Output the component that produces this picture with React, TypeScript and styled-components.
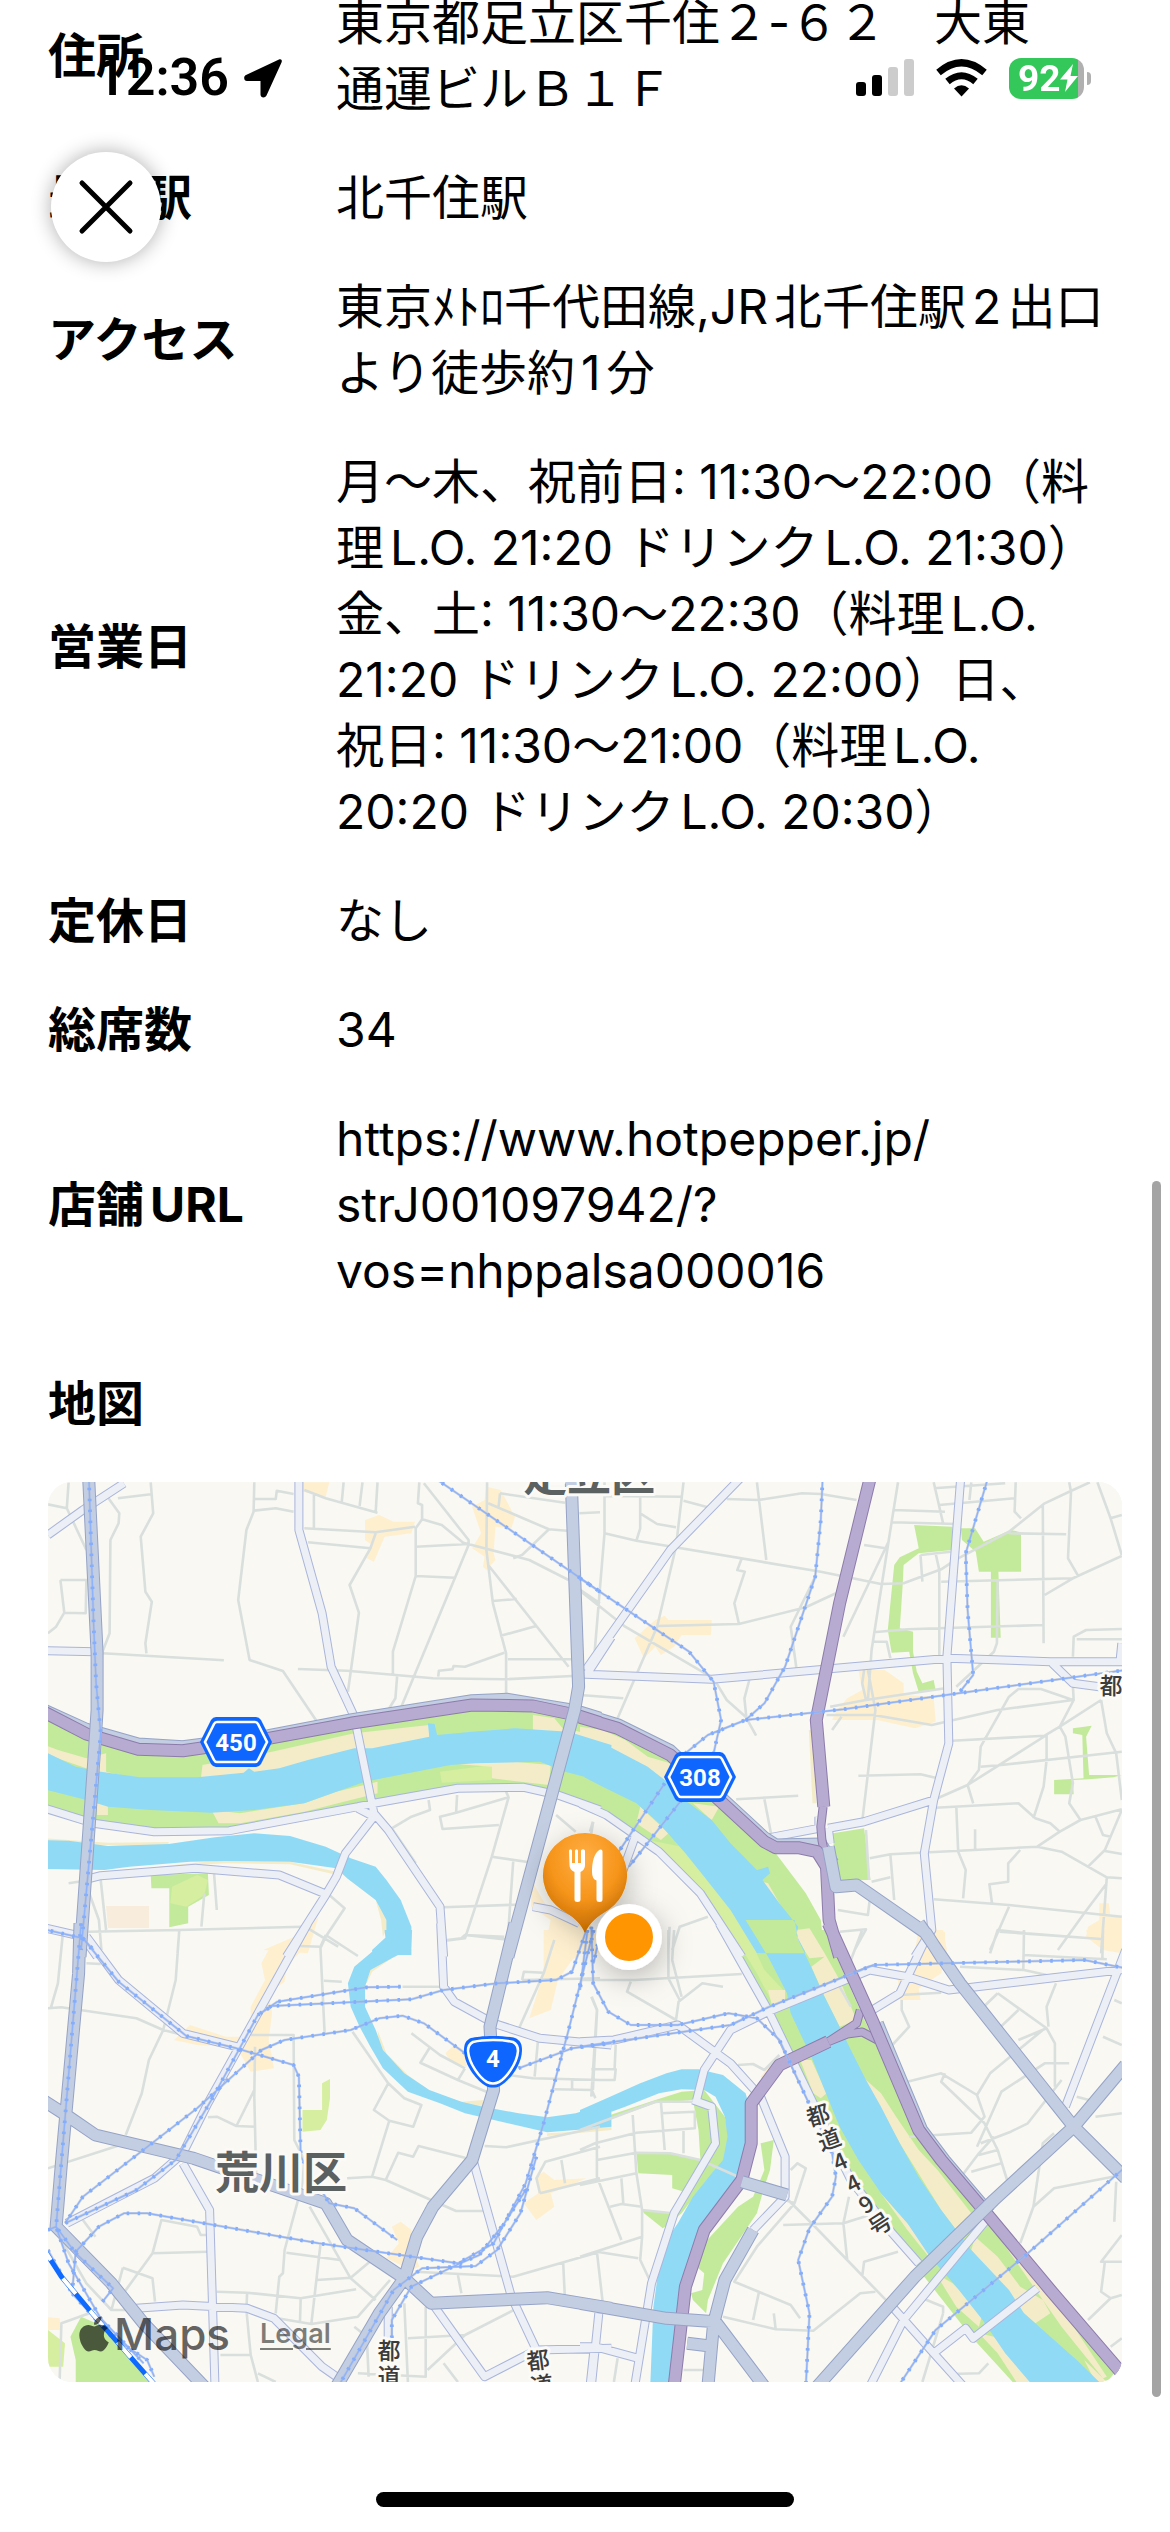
import React from 'react';
import styled, { createGlobalStyle } from 'styled-components';
import { FaApple } from 'react-icons/fa';

const latin = 'Inter, Roboto, "Noto Sans CJK JP", sans-serif';

const GlobalStyle = createGlobalStyle`
  * { box-sizing: border-box; }
  html { overflow-x: hidden; scrollbar-width: none; }
  body {
    margin: 0;
    background: #fff;
    color: #000;
    font-family: ${latin};
    text-autospace: normal;
  }
`;

/* ---------- status bar ---------- */

const StatusBar = styled.header`
  position: fixed;
  inset: 0 0 auto 0;
  z-index: 3;
  height: 156px;
  padding: 0 79px 0 96px;
  display: flex;
  justify-content: space-between;
  align-items: center;
  pointer-events: none;
`;

const StatusGroup = styled.div<{ $gap: number }>`
  display: flex;
  align-items: center;
  gap: ${(p) => p.$gap}px;
`;

const Clock = styled.time`
  font: 600 52px/60px Roboto, sans-serif;
`;

const Battery = styled.div`
  display: flex;
  align-items: center;
  gap: 3px;
`;

const BatteryBody = styled.div`
  width: 75px;
  height: 41px;
  padding-left: 9px;
  display: flex;
  align-items: center;
  border-radius: 12px;
  color: #fff;
  background: linear-gradient(90deg, #34c759 69px, #b0b0b0 69px);
  font: 700 37px/41px Roboto, sans-serif;
`;

const BatteryCap = styled.div`
  width: 4px;
  height: 13px;
  border-radius: 0 4px 4px 0;
  background: #b0b0b0;
`;

/* ---------- floating controls ---------- */

const CloseButton = styled.button`
  position: fixed;
  top: 152px;
  left: 51px;
  z-index: 2;
  width: 110px;
  height: 110px;
  padding: 0;
  display: grid;
  place-items: center;
  border: 0;
  border-radius: 50%;
  background: #fff;
  box-shadow: 0 0 20px rgba(0, 0, 0, 0.32);
`;

const ScrollThumb = styled.div`
  position: fixed;
  top: 1181px;
  right: 9px;
  bottom: 135px;
  width: 9px;
  border-radius: 5px;
  background: #a4a4a4;
`;

const HomeIndicator = styled.div`
  position: fixed;
  bottom: 25px;
  left: 50%;
  width: 418px;
  height: 15px;
  margin-left: -209px;
  border-radius: 8px;
  background: #000;
`;

/* ---------- page ---------- */

const Page = styled.main`
  margin-top: -10px;
  padding: 0 48px 150px;
`;

const Details = styled.dl`
  margin: 0;
  display: flex;
  flex-direction: column;
  gap: 43px;
`;

const Row = styled.div`
  display: grid;
  grid-template-columns: 288px 1fr;
  align-items: center;
  line-height: 66px;
`;

const Label = styled.dt`
  font-size: 48px;
  font-weight: 700;
`;

const Value = styled.dd`
  margin: 0;
  font-size: 48px;
  white-space: pre;
`;

const ShopLink = styled.a`
  color: inherit;
  text-decoration: none;
`;

const MapHeading = styled.h2`
  margin: 67px 0 45px;
  font-size: 48px;
  line-height: 66px;
  font-weight: 700;
`;

const MapFrame = styled.figure`
  position: relative;
  margin: 0;
  overflow: hidden;
  border-radius: 24px;
  background: #f9f8f3;
`;

const MapCanvas = styled.svg`
  display: block;
  width: 100%;
  height: auto;
`;

const MapCredit = styled.figcaption`
  position: absolute;
  left: 26px;
  bottom: 20px;
  display: flex;
  align-items: center;
  gap: 30px;
  color: rgba(0, 0, 0, 0.62);
`;

const MapBrand = styled.span`
  display: flex;
  align-items: center;
  font-size: 44px;
  line-height: 56px;
  font-weight: 500;
`;

const LegalLink = styled.a`
  color: rgba(0, 0, 0, 0.5);
  font-size: 27px;
  line-height: 34px;
  font-weight: 600;
  text-underline-offset: 5px;
`;

/* ---------- map geometry ---------- */

// The map is drawn from four sheets. Each sheet has its own grid,
// which is projected on the 1074 x 900 canvas.
type Sheet = 'nw' | 'ne' | 'sw' | 'se';
type Layer = Record<Sheet, string>;

const sheets: Record<Sheet, { x: number; y: number; sx: number }> = {
  nw: { x: -8, y: -12, sx: 2.8 },
  ne: { x: 532, y: -12, sx: 2.6576 },
  sw: { x: -8, y: 448, sx: 2.8 },
  se: { x: 532, y: 448, sx: 2.6576 },
};

// Lines are separated by ";" and points by blanks.
const project = (layer: Layer, close = false) =>
  (Object.keys(sheets) as Sheet[])
    .flatMap((key) => {
      const s = sheets[key];
      return layer[key]
        .split(';')
        .filter((line) => line.trim())
        .map(
          (line) =>
            'M' +
            line
              .trim()
              .split(/\s+/)
              .map((pt) => {
                const [x, y] = pt.split(',').map(Number);
                return `${(s.x + x / s.sx).toFixed(1)} ${(s.y + y / 3).toFixed(1)}`;
              })
              .join('L') +
            (close ? 'Z' : '')
        );
    })
    .join('');

const town = project(
  {
    nw: `735,37 810,37 800,80 735,65; 910,150 950,135 990,155 1050,155 1040,190 965,200 935,275 915,265 930,225 910,210;
      1250,50 1290,60 1330,140 1320,175 1275,170 1270,250 1275,270 1250,300 1240,290 1245,260 1210,235 1235,190 1210,110 1245,90;
      1375,1230 1430,1330 1540,1360 1568,1450 1410,1450 1430,1350 1375,1310; 625,1440 735,1390 780,1340 770,1375 750,1450`,
    ne: `145,505 200,450 225,437 235,450 350,450 348,495 270,495 250,530 215,555 200,530 170,565;
      740,600 810,600 860,640 860,675 940,680 945,755 890,775 790,750 670,750 680,725 710,685 750,660;
      1380,1300 1405,1300 1410,1340 1440,1340 1440,1450 1390,1440 1345,1400 1350,1370 1380,1350; 930,1390 970,1385 970,1440 900,1440`,
    sw: `640,60 750,0 760,30 690,110 685,155 640,190 650,250 640,330 655,415 590,425 550,350 440,345 375,330 420,285 520,320 590,320 590,230 630,150 620,100;
      1410,0 1568,0 1568,30 1490,90 1450,150 1430,240 1370,265 1410,130; 1135,370 1160,345 1190,360 1195,410 1150,395;
      985,890 1010,875 1040,900 1045,960 1062,1010 1040,1020 1000,1000 970,985 1005,940;
      1390,740 1410,725 1440,750 1530,745 1430,790 1440,830 1390,870 1355,820 1395,790; 22,1162 55,1165 60,1200 22,1200`,
    se: `900,0 965,0 975,60 960,130 900,175 905,210 850,210 845,150 880,120; 1345,0 1440,0 1440,40 1400,60 1390,30 1350,20; 480,440 510,400 520,410 490,460`,
  },
  true
);

const park = project(
  {
    nw: `0,730 140,800 270,840 400,845 640,820 880,770 1200,705 1320,700 1480,735 1600,780 1600,1020 1450,970 1340,950 1170,950 940,1000 530,1080 320,1080 150,1050 0,1005;
      310,1215 470,1210 473,1275 415,1310 415,1360 362,1372 362,1255 312,1255`,
    ne: `0,760 110,795 240,870 380,990 480,1120 520,1150 600,1270 640,1350 650,1450 420,1450 330,1280 180,1130 100,1060 0,1000;
      888,165 990,170 990,240 900,250 860,285 858,340 850,475 885,485 885,545 895,605 910,640 940,630 945,660 900,665 885,610 875,545 828,548 818,480 825,400 835,285 850,262 900,235;
      1012,175 1050,175 1073,215 1145,180 1172,187 1172,305 1112,305 1118,503 1092,503 1092,305 1060,305 1052,245 1015,210;
      1310,775 1360,767 1345,800 1353,915 1440,915 1418,922 1353,928 1310,930 1312,973 1260,973 1260,930 1338,925 1335,795 1310,790;
      672,1090 755,1075 772,1230 680,1230`,
    sw: `85,1220 115,1160 180,1190 310,1356 100,1356 100,1290`,
    se: `650,0 760,280 860,500 960,680 1100,870 1250,1090 1420,1330 1400,1356 1150,1356 1040,1220 880,990 720,760 620,520 500,230 390,0;
      0,595 40,570 200,510 270,485 330,480 385,560 395,620 380,700 330,760 270,850 240,880 220,895 170,850 165,840 245,850 290,790 245,775 245,735 155,730 150,670 240,670 320,690 315,600 300,510 200,520 50,580 0,600;
      480,640 515,630 505,720 490,770 470,850 440,900 380,1000 340,1110 335,1150 300,1110 295,1090 325,1080 330,1030 310,1010 330,940 420,830 460,800 490,720`,
  },
  true
);

const lawn = project(
  {
    nw: `1120,905 1265,885 1265,930 1125,938; 370,1250 440,1215 470,1230 460,1275 410,1310 365,1300`,
    ne: `180,1110 270,1130 350,1230 440,1360 480,1450 430,1450 330,1280 230,1170`,
    sw: `735,540 790,540 790,460 812,447 812,505 803,570 785,600 735,605; 22,1200 70,1240 65,1310 22,1310`,
    se: `400,0 440,0 490,120 540,180 510,215 470,130`,
  },
  true
);

const sand = project(
  {
    nw: `0,820 50,840 130,865 185,850 185,905 260,925 170,910 22,855; 455,885 650,845 880,790 1090,765 1090,810 880,850 600,920 450,930;
      1380,735 1440,745 1475,790 1380,780; 480,1020 560,1030 740,1000 830,965 945,935 945,970 740,1025 560,1060 500,1060;
      160,1000 190,1005 190,1035 160,1035; 1140,880 1270,870 1430,885 1425,945 1265,925 1265,890; 1490,780 1568,800 1568,830 1490,790;
      0,1104 190,1118 360,1116 360,1130 0,1120; 170,1210 420,1180 520,1170 700,1175 830,1205 820,1212 700,1183 520,1180 250,1197; 860,1225 940,1290 955,1350 960,1400 990,1340 940,1250`,
    ne: `0,770 60,780 120,810 180,860 240,880 230,935 180,895 60,830 0,815; 300,1000 370,1010 350,1050; 160,1010 235,1090 215,1110 150,1060;
      575,1380 610,1375 650,1450 600,1450; 485,1235 500,1240 535,1310 525,1310; 608,780 620,780 628,1000 618,1000`,
    sw: `985,85 930,125 915,160 900,150 925,100; 945,300 970,370 1030,435 1095,485 1180,515 1240,510 1240,540 1080,500 950,370; 1420,610 1500,605 1600,585 1600,600 1420,618`,
    se: `575,0 610,10 650,70 690,150 735,270 690,290 650,200 615,110 650,80 610,85 580,30;
      740,430 800,490 840,560 900,660 950,720 1040,850 1000,900 960,840 850,640 790,520;
      1050,920 1110,980 1170,1070 1230,1110 1250,1150 1210,1180 1150,1120 1040,960; 585,390 615,390 655,490 640,505 620,490;
      500,180 545,180 545,210 510,225; 945,1030 990,1060 1070,1150 1060,1190 1000,1130; 1060,1210 1100,1220 1200,1356 1160,1356 1110,1270; 1340,1290 1400,1356 1370,1356;
      800,790 870,880 930,960 930,985 870,900; 1100,900 1300,1170 1400,1340 1390,1345 1280,1190`,
  },
  true
);

const water = project(
  {
    nw: `0,840 22,850 100,890 170,905 280,922 440,922 570,908 585,895 600,905 670,895 750,870 880,835 930,835 1090,800 1086,760 1105,762 1112,795 1210,785 1330,775 1480,785 1600,825 1600,940 1540,925 1470,905 1400,875 1220,880 1150,885 1030,910 910,935 830,965 740,1000 600,1020 480,1028 310,1020 190,1010 130,990 0,955;
      0,1110 80,1112 190,1128 360,1122 490,1102 600,1090 700,1098 800,1130 870,1165 940,1190 970,1230 1010,1290 1040,1370 1040,1455 930,1455 930,1440 970,1400 970,1350 940,1290 860,1225 830,1195 700,1175 520,1173 420,1175 250,1190 180,1200 0,1197`,
    ne: `0,810 70,825 180,890 225,930 290,1000 350,1050 400,1120 470,1200 500,1190 505,1210 485,1230 530,1300 580,1370 575,1395 600,1450 470,1450 400,1320 330,1220 280,1150 210,1060 150,1000 60,950 0,915`,
    sw: `965,0 1042,0 1040,55 985,85 925,120 910,170 910,230 940,300 960,360 1020,430 1090,480 1180,515 1240,530 1340,550 1420,562 1500,550 1600,515 1600,590 1500,600 1420,607 1310,580 1190,550 1120,520 1030,485 960,415 925,350 895,290 870,230 862,160 880,110 930,65 970,50`,
    se: `0,540 80,500 160,460 230,430 270,418 315,418 380,435 440,490 455,550 450,640 430,730 380,820 330,890 300,970 275,1060 260,1180 245,1356 187,1356 195,1130 205,1050 230,930 260,880 300,800 350,730 380,690 392,620 385,560 360,500 330,480 270,478 210,490 120,530 0,580;
      440,-30 500,80 550,190 560,250 585,310 615,380 650,480 690,590 740,690 800,790 870,880 930,980 1000,1070 1070,1170 1130,1270 1195,1356 1380,1356 1320,1290 1240,1210 1180,1150 1140,1080 1040,960 960,840 900,740 850,640 800,530 760,450 720,360 690,290 650,200 610,100 580,30 570,-30`,
  },
  true
);

const minor = project({
  nw: `80,37 75,115 22,103; 75,115 130,240; 185,75 222,130 220,160 197,210 195,490 175,545; 310,37 317,130 282,200 295,365 313,395 295,520 298,550;
    218,85 310,73; 175,550 515,571; 57,330 130,330 128,430 68,428 57,330; 68,428 45,470 22,490; 600,37 598,125 578,180 555,390 587,570 680,603 780,762;
    598,87 660,87 663,62 710,72; 598,122 660,115 710,125; 740,60 800,85 945,128; 850,37 845,95; 903,37 895,108; 945,37 940,125; 767,75 767,175;
    740,175 940,187 1050,170; 750,217 925,235 940,190; 925,235 867,345 893,428 862,665; 1062,37 1058,100 1070,105 1070,148 1052,175 1052,318 988,545 988,612;
    1052,318 1162,323; 1052,230 1200,222; 1075,40 1200,210 1200,225 1010,715; 1070,148 1125,165 1185,218 1370,270 1480,330;
    1252,37 1250,240 1268,400 1305,550 1305,675; 1255,285 1480,590; 1288,70 1470,98; 1288,70 1284,110; 1255,100 1425,178 1475,182; 1425,178 1350,255 1325,265;
    1268,393 1335,387; 1288,498 1392,467; 722,597 860,602 1100,625 1300,628 1490,618; 1115,620 1117,602 1155,598 1158,588 1190,590 1300,548;
    1310,568 1490,568; 1000,620 995,685 975,720; 1510,130 1568,127; 1500,350 1568,400; 1088,990 1092,1020 1040,1040 985,1075 1052,1180;
    1168,975 1165,1028 1120,1040 1127,1077 1285,1065; 1165,1028 1312,982 1265,1160 1190,1405 1135,1412; 1305,965 1312,982; 1265,1160 1380,1178;
    1130,1312 1365,1303; 1190,1395 1300,1400; 1445,1035 1500,1085; 1548,1055 1540,1085; 170,1230 185,1380; 487,1205 495,1320; 460,1270 452,1370;
    80,1240 140,1230; 135,1385 390,1380 735,1370; 390,1380 385,1450; 138,1270 165,1350 172,1440; 810,1275 853,1315 800,1400 785,1435; 750,1375 835,1430; 1325,1175 1310,1400`,
  ne: `65,37 65,190 40,530 35,600; 65,190 150,212 640,305 800,342 860,340 960,298; 160,80 160,130 205,162 255,172; 160,130 160,175 150,212;
    275,37 255,230 205,470 100,745; 65,78 270,80; 275,92 340,112; 390,87 475,90 590,70 640,72 735,90; 470,37 495,270; 430,265 418,300 438,305 410,400 422,460;
    205,468 422,462 600,412 680,370; 0,362 120,470 355,625 390,690 440,740 468,797; 450,630 437,685 442,740; 625,320 560,470 575,595;
    845,37 820,215 775,540 765,690; 835,120 970,125; 830,157 1000,162; 820,215 700,500; 755,225 812,235; 940,37 965,160; 940,55 1130,40; 955,105 1155,85;
    1158,37 1155,125 1172,145; 1355,37 1300,65 1235,100 1140,185 1000,268 960,298 860,340; 1140,190 1292,193; 1300,37 1305,65 1297,265 1325,320;
    1230,105 1232,520; 1440,258 1310,325 1235,375; 1375,37 1410,145 1440,135; 1410,145 1440,255; 955,298 955,560; 960,335 1310,325; 780,487 870,478 1230,465;
    905,255 910,335; 905,255 985,245; 945,250 955,300; 1110,330 1108,520 1100,545 1000,650; 780,515 815,515 825,565; 1310,560 1312,500 1345,480 1440,477; 1320,508 1440,508;
    765,600 785,720 750,1055; 665,710 760,690 970,655; 655,735 780,735 935,765 1110,720 1310,690; 695,740 670,780; 755,600 750,640 760,690;
    990,812 1235,797 1275,770 1385,690; 1310,690 1225,657 1165,657 1140,680 1065,830 1060,900 1030,945 1045,1000; 1310,650 1312,690 1275,770 1290,800 1310,940 1300,1000 1330,1050;
    1385,690 1400,790 1425,850 1440,990; 1065,890 1120,885 1440,845; 1240,795 1030,945 950,985; 1240,795 1240,870 1232,950 1205,1045; 740,917 905,913 950,925;
    415,988 580,977; 490,988 510,1105; 945,1013 1165,1000 1210,1045 1250,1060 1275,1085 1215,1130 825,1153 770,1165; 1000,1010 1005,1145 1025,1200 1018,1285;
    1275,1085 1330,1050 1440,1018; 1370,1040 1390,1095 1410,1100; 1440,1020 1395,1140 1350,1190; 1050,1078 1050,1140; 1215,1130 1280,1145 1400,1222 1440,1225;
    1400,1222 1385,1450; 1170,1140 1138,1180 1138,1235 1088,1243 1095,1300; 940,1288 1140,1305 1440,1340; 825,1155 835,1290; 775,1235 825,1222; 760,1080 768,1230;
    685,1320 765,1335 770,1290; 690,1385 760,1378 730,1440; 1140,1310 1090,1440; 1115,1385 1385,1407; 1340,1330 1270,1440; 1400,1240 1340,1330; 340,1340 265,1370 245,1440;
    238,1370 235,1440; 35,1055 30,1090; 1395,1143 1440,1152; 1040,37 1035,90; 0,675 115,685`,
  sw: `65,0 50,160 30,235; 22,235 60,232 270,265 345,300 420,320; 130,100 170,102; 390,0 380,150 345,300 305,390 285,490 240,615; 725,48 785,50 800,15; 785,50 797,310;
    800,15 890,78; 795,152 845,155; 590,315 710,315 712,630 740,690 735,760 685,960 680,1030 670,1040 660,1150; 602,350 600,500 605,730; 470,562 495,560 550,588 603,590;
    550,588 600,480; 875,305 975,460 1020,505 1068,525 1045,590 978,572 935,540 975,460; 978,572 930,740 860,745; 930,740 968,750 1165,843 1245,843;
    968,750 1003,668 1045,680 1060,648 1195,685; 1040,310 1120,375 1190,415; 1090,355 1065,398 1170,450 1250,485; 1190,415 1170,450; 1015,170 1125,170; 1140,30 1180,25 1190,15 1320,30;
    1350,150 1355,125 1410,128; 1350,150 1568,145; 1440,30 1410,130 1335,310; 1395,325 1385,440; 1310,435 1380,445 1568,450; 1440,478 1545,480 1555,505; 1490,450 1490,480; 1545,200 1560,240 1548,480;
    1245,648 1305,652 1568,590; 1400,790 1568,745; 1400,790 1390,745 1415,695 1568,650; 1460,690 1470,760; 22,715 240,640; 120,870 155,920;
    315,970 340,870 440,890 450,915 480,915; 315,970 470,965; 315,970 220,1110; 232,1013 315,1045 322,1115; 232,1013 200,1140 130,1060 60,930; 495,1085 580,1088 730,1105 885,1078;
    690,968 840,990; 785,945 760,1180; 775,1050 870,1043 935,985; 755,830 870,1045 940,1110; 640,1160 760,1182 890,1160 980,1050; 580,1088 578,1140 590,1275 610,1356; 505,1275 590,1275;
    730,1105 728,1175; 1050,1025 1325,1040 1568,965; 1170,1035 1180,1090; 1020,1120 1030,1356; 1080,1130 1080,1340 890,1330; 1030,1225 1190,1215 1345,1130; 1465,1000 1470,1110;
    920,1340 915,1220 880,1190; 1130,1300 1170,1356; 1190,1215 1085,1320; 55,1356 60,1180 150,1145; 200,1140 270,1140; 610,1330 660,1356`,
  se: `0,600 200,515 300,515; 45,595 45,740 110,930; 0,660 40,640 150,608 305,595 305,545 215,550; 140,555 150,730 0,765; 215,515 225,660; 275,598 275,670;
    45,690 150,668 240,670 320,690 440,750; 150,730 165,840 245,850; 80,830 110,822 165,830; 165,840 165,920 160,990 185,1050; 110,745 115,820; 0,980 45,965 155,985; 165,920 0,980; 45,965 60,1115;
    0,150 145,150 430,132; 135,155 125,185 255,270 262,215 325,160 380,170; 235,0 235,145 265,210; 250,0 245,90 270,200; 30,200 45,240 30,500; 30,418 95,418 92,450 30,450; 95,345 92,418; 0,480 30,480;
    420,405 460,402 490,420 530,375; 540,795 620,885 710,990 830,1130; 540,885 700,880 770,855; 715,800 700,880 710,990; 545,810 570,820 600,715 578,700 560,720;
    570,820 470,950 410,1055 560,1125 585,1165; 475,1090 460,1170; 380,1160 520,1198 620,1202 745,1090 785,1085; 515,1150 520,1198; 845,965 755,995 750,1040;
    750,0 720,90; 690,170 720,230; 855,210 855,240 875,290 830,345; 850,195 960,188; 1010,110 1180,120 1240,135; 1090,70 1110,0 1185,10 1390,28; 1180,0 1178,120;
    1178,75 1400,88; 1390,0 1388,90; 1110,190 1240,295 1262,340 1262,470; 1110,190 1055,250; 1165,240 1100,310; 1240,295 1165,330; 1230,300 1090,430 1055,495 960,430 870,455;
    970,430 960,455 1075,580 1110,660 1135,750; 1055,495 1075,560 1040,608 875,620; 1055,650 1120,485 1235,400 1300,400; 1065,640 1145,605 1190,580 1280,450;
    1060,675 1110,660; 1040,725 1120,700; 1010,745 1060,670 1100,620; 1265,160 1240,230 1245,290; 1390,320 1440,345; 1370,560 1440,550; 1320,500 1370,515; 1260,610 1230,640 1205,830 1170,940;
    1205,830 1260,775 1440,735; 1425,755 1420,875; 1440,915 1385,995 1440,995; 1395,995 1385,1085 1410,1105 1440,1095; 1440,1225 1410,1250; 1410,1105 1350,1170; 1085,1300 1060,1330 985,1332;
    965,1150 910,1356; 275,1320 330,1320; 100,1285 90,1356; 900,1100 965,1130 965,1150; 1420,210 1440,220`,
});

const street = project({
  nw: `22,195 120,120 235,40; 725,20 725,180 790,430 815,590 880,740 935,1030 975,1080 1120,1310 1130,1460; 0,542 155,545;
    0,1010 150,1060 320,1085 530,1082 890,1010 935,1000 1170,955 1355,952 1450,975 1568,1020; 935,1040 855,1150 830,1220 800,1275 690,1460;
    140,1225 170,1217 435,1195 670,1215 800,1272; 1530,615 1600,500; 1380,1310 1430,1320 1510,1360; 0,1370 120,1400 160,1460; 890,1015 935,1040`,
  ne: `430,20 240,240 15,600; 0,612 350,628 980,565 1250,575 1450,575; 1012,20 975,560 980,820 940,990 915,1150 935,1380 890,1460; 1255,580 1310,640 1380,650;
    660,1075 755,1055 940,990; 495,1105 635,1075 635,1040; 0,1000 70,1035 210,1145 320,1270 430,1460; 1440,520 1435,575; 150,1090 105,1230; 660,1075 665,1120`,
  sw: `130,20 220,150 400,310 550,350; 750,-20 470,520 400,670 320,745 75,880; 400,700 475,840 490,1370; 270,1135 400,1125 580,1135 655,1165 790,1310 830,1340;
    1122,-20 1130,170 1160,215 1270,280 1400,325 1600,345; 1215,700 1320,1100 1390,1260 1600,1255; 1105,1130 1245,1340 1390,1260; 975,1130 975,1230; 1550,1270 1540,1370`,
  se: `370,-20 500,240 620,520 720,750 830,910 900,1000; 0,335 90,330 260,285 400,400 480,500 545,680 545,800 460,900; 300,510 350,530 360,640 250,850 190,1060 145,1370;
    310,510 330,420 400,300 500,245 770,120 870,140 980,180 1450,118; 930,0 850,190 770,245; 1450,60 1290,530; 1080,870 860,1170 770,1370; 830,1130 940,1270 1020,1370;
    940,1270 1025,1195 1045,1225 1215,1075; 50,1150 30,1370; 0,1250 40,1250 155,1285`,
});

const arterial = project({
  nw: `136,20 160,550 160,720 152,850 112,1460; 1487,20 1508,650 1497,720 1310,1460`,
  ne: `660,1130 680,1250 735,1245 920,1390 965,1470`,
  sw: `112,-20 108,130 60,700 45,890 200,1060 290,1180 460,1370; 0,505 80,560 155,615 430,685 800,820 860,930 1020,1045 1095,1120 1420,1103 1600,1135;
    1330,-20 1260,290 1270,480 1210,690 1100,830 1055,920 1020,1045 950,1150 830,1370`,
  se: `0,1120 230,1165 360,1175 490,1370; 460,900 385,1050 355,1180 340,1370; 430,755 550,795; 285,1240 340,1247; 900,-20 1010,160 1312,590 1450,745;
    1450,405 1312,590 1100,810 890,1040 630,1370`,
});

const arterialShadow = project({
  nw: `0,715 130,778 275,822 400,830 640,797 870,750 1210,692 1310,688 1500,722 1568,745`,
  ne: `0,730 100,764 240,842 490,1103 520,1125 640,1122 672,1180`,
  sw: ``,
  se: `790,280 908,600 968,690 1088,850`,
});

const expressway = project({
  nw: `0,720 130,792 275,838 400,842 640,805 870,760 1210,705 1380,708 1500,735 1568,758`,
  ne: `0,742 100,775 240,855 490,1115 520,1133 580,1133 630,1145 655,1190 662,1350 690,1460; 772,20 690,400 628,750 648,1010`,
  sw: ``,
  se: `660,-20 780,280 900,600 960,690 1080,850 1250,1080 1440,1330; 660,335 530,405 455,520 455,640 430,750 330,900 280,1070 250,1370`,
});

const ramp = project({
  nw: ``,
  ne: `646,1010 640,1070 643,1110 650,1150`,
  sw: ``,
  se: `745,240 735,280 660,335; 660,335 710,312 750,306 790,330`,
});

const rail = project({
  nw: `137,20 150,460 157,640 170,790 115,1440; 1100,20 1568,365; 0,1375 120,1405 150,1440`,
  ne: `0,325 290,545 355,635 375,750 355,850; 645,20 640,150 625,320 545,590 490,700 440,750 340,795 280,850; 440,750 700,718 1450,600; 1085,20 1025,250 1030,420 1045,615 1010,665;
    225,940 100,1150 30,1290; 270,990 130,1190`,
  sw: `115,-20 45,890 100,970; 0,-5 120,25 220,155 410,318 550,355 710,405 725,440 730,680 810,820 880,835 1000,930; 1010,170 915,172 665,215 610,255 480,510 380,690 270,780 70,880;
    1530,0 1490,125 1445,150 1280,160 1130,180 1040,208 650,228 610,255; 1190,370 1075,280 1015,257 950,265 870,300 685,330 620,360 440,535 120,800 70,880; 1340,415 1490,355 1600,340;
    1550,0 1480,300 1410,580 1360,760 1270,940 1170,1000 780,940 300,850 235,850 165,890 100,965 90,1090 200,1220 300,1290 320,1340;
    1390,680 1345,850 1280,960 1220,1008 1070,1015 990,1080 835,1370; 1360,780 1300,880 1230,975 1170,1003 1040,1070 985,1170 985,1240; 1568,10 1550,100; 22,900 45,890 80,1000 170,1165 290,1300;
    100,970 205,1075 175,1115; 22,960 90,1090`,
  se: `30,-10 35,160 75,245 135,285 260,285 395,250 470,265 530,330 600,500 670,670 680,740 670,800 610,895 580,990 610,1150 600,1370; 20,0 0,180;
    0,350 400,285 500,232 780,105 1340,90 1450,115; 1450,710 1190,970 945,1200 845,1370`,
});

const bullet = project({ nw: ``, ne: ``, sw: `0,940 60,1040 150,1155 330,1375`, se: `` });

type RoadProps = { d: string; casing: string; fill: string; width: number };
const Road = ({ d, casing, fill, width }: RoadProps) => (
  <>
    <path d={d} stroke={casing} strokeWidth={width} />
    <path d={d} stroke={fill} strokeWidth={width - 2} />
  </>
);

const HexShield = ({ x, y, label }: { x: number; y: number; label: string }) => (
  <g transform={`translate(${x} ${y})`}>
    <path d="M-20-25H20Q23-25 25-22L36 0 25 22Q23 25 20 25H-20Q-23 25-25 22L-36 0-25-22Q-23-25-20-25Z" fill="#0f66ff" />
    <path d="M-19-20H19Q21-20 22-18L31 0 22 18Q21 20 19 20H-19Q-21 20-22 18L-31 0-22-18Q-21-20-19-20Z" fill="none" stroke="#fff" strokeWidth="2.6" />
    <text y="9" textAnchor="middle" fontFamily="Roboto, sans-serif" fontWeight="700" fontSize="24" fill="#fff">{label}</text>
  </g>
);

type MapLabelProps = { x: number; y: number; text: string; size?: number; angle?: number };
const MapLabel = ({ x, y, text, size = 23, angle = 0 }: MapLabelProps) => (
  <text
    transform={`translate(${x} ${y}) rotate(${angle})`}
    dy={size * 0.38}
    textAnchor="middle"
    fontFamily='"Noto Sans CJK JP", sans-serif'
    fontWeight={size > 30 ? 700 : 500}
    fontSize={size}
    fill={size > 30 ? '#5b6060' : '#3c3c3c'}
    stroke="#fbfaf7"
    strokeWidth="6"
    strokeLinejoin="round"
    paintOrder="stroke"
  >
    {text}
  </text>
);

const roadName = [
  { text: '都', x: 770, y: 633, angle: -17 },
  { text: '道', x: 781, y: 657, angle: -20 },
  { text: '4', x: 792, y: 679, angle: -24 },
  { text: '4', x: 805, y: 701, angle: -27 },
  { text: '9', x: 818, y: 722, angle: -30 },
  { text: '号', x: 832, y: 742, angle: -33 },
  { text: '都', x: 1063, y: 203, angle: 0 },
  { text: '都', x: 341, y: 868, angle: 0 },
  { text: '道', x: 341, y: 894, angle: 0 },
  { text: '都', x: 490, y: 878, angle: -8 },
  { text: '道', x: 494, y: 903, angle: -8 },
];

const AreaMap = () => (
  <MapCanvas viewBox="0 0 1074 900" role="img" aria-label="地図">
    <defs>
      <radialGradient id="pin" cx="0.5" cy="0.25" r="0.75">
        <stop offset="0" stopColor="#ffae45" />
        <stop offset="0.55" stopColor="#f6951a" />
        <stop offset="1" stopColor="#c26a00" />
      </radialGradient>
      <filter id="soft" x="-60%" y="-60%" width="220%" height="220%">
        <feDropShadow dx="2" dy="8" stdDeviation="14" floodOpacity="0.25" />
      </filter>
    </defs>
    <rect width="1074" height="900" fill="#f9f8f3" />
    <path d={town} fill="#feefcf" />
    <path d="M58 424H101V446H60Z" fill="#f8eddd" />
    <path d={park} fill="#c3ea9b" />
    <path d={lawn} fill="#d6ee9f" />
    <path d={sand} fill="#f4ecc9" />
    <path d={water} fill="#90daf6" />
    <g fill="none" strokeLinejoin="round">
      <path d={minor} stroke="#d9dfdd" strokeWidth="2.6" />
      <Road d={street} casing="#a9b5da" fill="#eceff6" width={9} />
      <Road d={arterialShadow} casing="#95a3c6" fill="#c3cee3" width={13} />
      <Road d={ramp} casing="#8c7cab" fill="#b8abd1" width={9} />
      <Road d={expressway} casing="#8c7cab" fill="#b8abd1" width={13} />
      <Road d={arterial} casing="#95a3c6" fill="#c3cee3" width={13} />
      <path d={rail} stroke="#b9bfd0" strokeWidth="2.6" opacity="0.6" />
      <path d={rail} stroke="#8fb3fa" strokeWidth="1.4" />
      <path d={rail} stroke="#84adfb" strokeWidth="3.8" strokeDasharray="2.5 8.500" />
      <path d={bullet} stroke="#0f6bff" strokeWidth="5" />
      <path d={bullet} stroke="#fff" strokeWidth="4" strokeDasharray="20 22" />
    </g>

    <MapLabel x={541} y={-8} text="足立区" size={44} />
    <MapLabel x={233} y={690} text="荒川区" size={44} />
    {roadName.map((c) => (
      <MapLabel key={`${c.x}-${c.y}`} {...c} />
    ))}

    <HexShield x={188} y={260} label="450" />
    <HexShield x={652} y={295} label="308" />
    <g transform="translate(445 580)">
      <path d="M0-26C10-26 18-25 22-24 27-22 29-18 29-12 29 4 15 20 7 24 3 26-3 26-7 24-15 20-29 4-29-12-29-18-27-22-22-24-18-25-10-26 0-26Z" fill="#0f66ff" />
      <path d="M0-22C9-22 16-21 20-20 24-18 25-15 25-11 24 2 13 16 6 20 2 22-2 22-6 20-13 16-24 2-25-11-25-15-24-18-20-20-16-21-9-22 0-22Z" fill="none" stroke="#fff" strokeWidth="2.6" />
      <text y="5" textAnchor="middle" fontFamily="Roboto, sans-serif" fontWeight="700" fontSize="24" fill="#fff">4</text>
    </g>

    <g filter="url(#soft)">
      <path d="M537 351A42 42 0 0 0 513 427.500C525 435 532 440 537 451 542 440 549 435 561 427.500A42 42 0 0 0 537 351Z" fill="url(#pin)" />
    </g>
    <path
      d="M521 368.500Q522.500 366 524 368.500V381H527V368.500Q528.500 366 530 368.500V381H533V368.500Q535 366 537 368.500V383Q537 388 532.500 390V417.500Q532.500 420 529.500 420T526.500 417.500V390Q521.500 388 521.500 383Z M554.500 369.500Q554.500 367 552 367.500C546 371 544 380 544 390Q544 397 548.500 398.500V417.500Q548.500 420 551.500 420T554.500 417.500Z"
      fill="#fff"
    />
    <circle cx="581" cy="455" r="33" fill="#fff" filter="url(#soft)" />
    <circle cx="581" cy="455" r="24" fill="#ff9500" />
  </MapCanvas>
);

/* ---------- content ---------- */

const rows: { label: string; value: string; link?: boolean }[] = [
  { label: '住所', value: '東京都足立区千住２-６２　大東\n通運ビルＢ１Ｆ' },
  { label: '最寄駅', value: '北千住駅' },
  { label: 'アクセス', value: '東京ﾒﾄﾛ千代田線,JR北千住駅2出口\nより徒歩約1分' },
  {
    label: '営業日',
    value:
      '月〜木、祝前日: 11:30〜22:00（料\n理L.O. 21:20 ドリンクL.O. 21:30）\n金、土: 11:30〜22:30（料理L.O.\n21:20 ドリンクL.O. 22:00）日、\n祝日: 11:30〜21:00（料理L.O.\n20:20 ドリンクL.O. 20:30）',
  },
  { label: '定休日', value: 'なし' },
  { label: '総席数', value: '34' },
  { label: '店舗URL', value: 'https://www.hotpepper.jp/\nstrJ001097942/?\nvos=nhppalsa000016', link: true },
];

export default function App() {
  return (
    <>
      <GlobalStyle />
      <StatusBar>
        <StatusGroup $gap={14}>
          <Clock>12:36</Clock>
          <svg width="40" height="40" viewBox="0 0 40 40" aria-hidden="true">
            <path d="M36 1.500 3 17C0 18.500 1 23 4 23H17.500V36.500C17.500 40 22 40.500 23.500 37.500L38.500 4.500C39.500 2 38 .500 36 1.500Z" />
          </svg>
        </StatusGroup>
        <StatusGroup $gap={22}>
          <svg width="58" height="38" viewBox="0 0 58 38" aria-hidden="true">
            <rect y="23" width="10" height="14" rx="3" />
            <rect x="16" y="16" width="10" height="21" rx="3" />
            <rect x="32" y="8" width="10" height="29" rx="3" fill="#ccc" />
            <rect x="48" width="10" height="37" rx="3" fill="#ccc" />
          </svg>
          <svg width="51" height="38" viewBox="0 0 51 38" aria-hidden="true">
            <path d="M25.500 37.500 18 29.500Q25.500 23 33 29.500Z" />
            <g fill="none" stroke="#000" strokeWidth="7">
              <path d="M11.500 22.500Q25.500 11 39.500 22.500" />
              <path d="M2.500 13.500Q25.500-6 48.500 13.500" />
            </g>
          </svg>
          <Battery>
            <BatteryBody>
              92
              <svg width="18" height="28" viewBox="0 0 18 28" aria-hidden="true">
                <path d="M13 0 0 15.500H7.500L5 28 18 12H10.500Z" fill="#fff" />
              </svg>
            </BatteryBody>
            <BatteryCap />
          </Battery>
        </StatusGroup>
      </StatusBar>

      <CloseButton type="button" aria-label="閉じる">
        <svg width="56" height="56" viewBox="0 0 56 56" aria-hidden="true">
          <path d="M4 4 52 52M52 4 4 52" stroke="#000" strokeWidth="5" strokeLinecap="round" />
        </svg>
      </CloseButton>

      <Page>
        <Details>
          {rows.map((row) => (
            <Row key={row.label}>
              <Label>{row.label}</Label>
              <Value>{row.link ? <ShopLink href="#shop">{row.value}</ShopLink> : row.value}</Value>
            </Row>
          ))}
        </Details>
        <MapHeading>地図</MapHeading>
        <MapFrame>
          <AreaMap />
          <MapCredit>
            <MapBrand>
              <FaApple size={40} aria-hidden="true" />
              Maps
            </MapBrand>
            <LegalLink href="#legal">Legal</LegalLink>
          </MapCredit>
        </MapFrame>
      </Page>

      <ScrollThumb />
      <HomeIndicator />
    </>
  );
}
